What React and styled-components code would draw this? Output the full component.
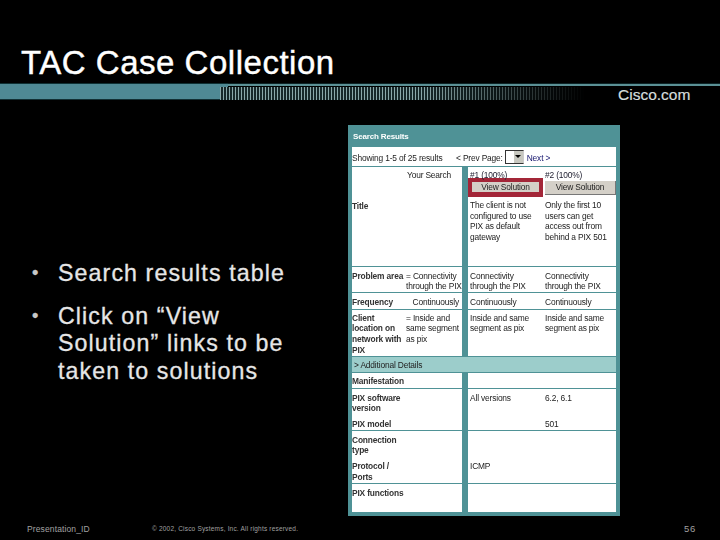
import React from 'react';
import styled, { createGlobalStyle } from 'styled-components';

const GlobalStyle = createGlobalStyle`
    html, body {
        margin: 0;
        padding: 0;
        background: #000;
    }
    * {
        box-sizing: border-box;
    }
`;

const Slide = styled.div`
    width: 720px;
    height: 540px;
    background: #000;
    color: #fff;
    font-family: "Liberation Sans", Arial, sans-serif;
    display: flex;
    flex-direction: column;
    overflow: hidden;
`;
const Title = styled.h1`
    margin: 0;
    height: 83px;
    padding: 44px 0 0 21px;
    font-size: 33px;
    line-height: 38px;
    font-weight: 400;
    letter-spacing: 0.52px;
    color: #fff;
    -webkit-text-stroke: 0.4px #fff;
`;
const Rule = styled.div`
    height: 17px;
    display: flex;
    align-items: stretch;
    position: relative;
    background: linear-gradient(#0c2224 0 1px, #5b9095 1px 3px, #000 3px);
`;
const RuleSolid = styled.div`
    width: 228px;
    margin-right: -8px;
    background: linear-gradient(#0f3033 0 1px, #4f8994 1px 16px, #123034 16px);
    clip-path: polygon(0 0, 100% 0, 100% 5px, 220px 100%, 0 100%);
`;
const RuleStripes = styled.div`
    width: 365px;
    margin-top: 4px;
    background: repeating-linear-gradient(90deg, #8aa8aa 0 1px, #16282a 1px 3px);
    mask-image: linear-gradient(90deg, #000 55%, transparent);
`;
const Logo = styled.div`
    position: absolute;
    left: 618px;
    top: 3px;
    font-size: 15.5px;
    line-height: 18px;
    color: #d5dddd;
    -webkit-text-stroke: 0.2px #d5dddd;
`;
const Main = styled.main`
    flex: 1;
    display: flex;
    padding-top: 25px;
`;
const Bullets = styled.ul`
    width: 348px;
    margin: 0;
    padding: 135px 0 0 32px;
    list-style: none;
    display: flex;
    flex-direction: column;
    gap: 15px;
`;
const Bullet = styled.li`
    display: flex;
    font-size: 23.2px;
    line-height: 27.5px;
    letter-spacing: 1.1px;
    color: #e6e6e6;
    -webkit-text-stroke: 0.3px #e6e6e6;
    &::before {
        content: "•";
        width: 26px;
        flex: none;
        font-size: 18px;
        color: #c8c8c8;
    }
`;
const Shot = styled.div`
    width: 272px;
    height: 391px;
    padding: 0 4px 4px;
    background: #4f9296;
    color: #222;
    font-size: 8.4px;
    letter-spacing: -0.16px;
    line-height: 10.7px;
    display: flex;
    flex-direction: column;
    filter: blur(0.35px);
`;
const ShotHeader = styled.div`
    height: 22px;
    padding: 6px 1px 0;
    color: #fff;
    font-size: 8px;
    font-weight: 700;
    line-height: 11px;
`;
const Pager = styled.div`
    height: 20px;
    padding-top: 3px;
    background: #fff;
    display: flex;
    align-items: center;
    border-bottom: 1px solid #4f9296;
    white-space: pre;
`;
const Counter = styled.span`
    width: 104px;
`;
const PageSelect = styled.span`
    width: 19px;
    height: 14px;
    margin: -3px 3px 0 2px;
    border: 1px solid #333;
    border-right-color: #ccc;
    display: flex;
    justify-content: flex-end;
    background: #fff;
`;
const SelectArrow = styled.span`
    width: 9px;
    background: #c8c8c0;
    display: flex;
    align-items: center;
    justify-content: center;
    &::after {
        content: "";
        border: 3px solid transparent;
        border-top: 3px solid #000;
        margin-top: 3px;
    }
`;
const NextLink = styled.span`
    color: #16166e;
`;
const Row = styled.div`
    height: ${(p) => p.$h}px;
    flex: ${(p) => (p.$grow ? 1 : 'none')};
    display: grid;
    grid-template-columns: 53px 57px 6px 74px 74px;
    background: #fff;
    border-bottom: ${(p) => (p.$open ? 'none' : '1px solid #4f9296')};
`;
const Label = styled.div`
    font-weight: 700;
    color: #333;
    padding-top: ${(p) => p.$top || 4}px;
    margin-right: -6px;
    white-space: nowrap;
`;
const LabelBlock = styled.div`
    margin-top: ${(p) => p.$gap || 0}px;
`;
const Cell = styled.div`
    padding: ${(p) => p.$top || 4}px ${(p) => p.$right || 0}px 0 ${(p) => p.$left || 2}px;
    text-align: ${(p) => p.$align || 'left'};
    white-space: nowrap;
`;
const Gutter = styled.div`
    background: #4f9296;
`;
const Heading = styled.div`
    height: 7.5px;
    padding-left: ${(p) => p.$left}px;
    color: #223;
`;
const RedFrame = styled.div`
    width: 75px;
    height: 19px;
    border: 4px solid #a32638;
    border-bottom-width: 5px;
    background: #d4d0c8;
    text-align: center;
    line-height: 10px;
`;
const ViewButton = styled.div`
    width: 71px;
    height: 14px;
    margin: 3px 0 0 3px;
    background: #d4d0c8;
    border-right: 1px solid #777;
    border-bottom: 1px solid #777;
    text-align: center;
    line-height: 12px;
`;
const Summary = styled.div`
    padding: ${(p) => p.$top}px 0 0 ${(p) => p.$left}px;
`;
const Band = styled.div`
    height: 16px;
    padding: 3px 2px 0;
    background: #9ccdcb;
    border-bottom: 1px solid #4f9296;
    flex: none;
`;
const Footer = styled.footer`
    height: 0;
    position: relative;
`;
const FootText = styled.span`
    position: absolute;
    left: ${(p) => p.$left}px;
    top: -17px;
    white-space: nowrap;
    color: #a0a0a0;
    font-size: ${(p) => p.$size}px;
    line-height: 12px;
    letter-spacing: ${(p) => p.$track}px;
`;

const App = () => {
    return (
        <Slide>
            <GlobalStyle />
            <Title>TAC Case Collection</Title>
            <Rule>
                <RuleSolid />
                <RuleStripes />
                <Logo>Cisco.com</Logo>
            </Rule>
            <Main>
                <Bullets>
                    <Bullet>Search results table</Bullet>
                    <Bullet>
                        <span>
                            Click on “View
                            <br />
                            Solution” links to be
                            <br />
                            taken to solutions
                        </span>
                    </Bullet>
                </Bullets>
                <Shot>
                    <ShotHeader>Search Results</ShotHeader>
                    <Pager>
                        <Counter>Showing 1-5 of 25 results</Counter>
                        <span>&lt; Prev Page:</span>
                        <PageSelect>
                            <SelectArrow />
                        </PageSelect>
                        <NextLink>Next &gt;</NextLink>
                    </Pager>
                    <Row $h={100}>
                        <Label $top={34}>Title</Label>
                        <Cell $align="right" $right={11} $top={3}>
                            Your Search
                        </Cell>
                        <Gutter />
                        <Cell $left={0.01} $top={3}>
                            <Heading $left={2}>#1 (100%)</Heading>
                            <RedFrame>View Solution</RedFrame>
                            <Summary $top={3.5} $left={2}>
                                The client is not
                                <br />
                                configured to use
                                <br />
                                PIX as default
                                <br />
                                gateway
                            </Summary>
                        </Cell>
                        <Cell $left={0.01} $top={3}>
                            <Heading $left={3}>#2 (100%)</Heading>
                            <ViewButton>View Solution</ViewButton>
                            <Summary $top={5.5} $left={3}>
                                Only the first 10
                                <br />
                                users can get
                                <br />
                                access out from
                                <br />
                                behind a PIX 501
                            </Summary>
                        </Cell>
                    </Row>
                    <Row $h={26}>
                        <Label $top={3.5}>Problem area</Label>
                        <Cell $left={1} $top={3.5}>
                            = Connectivity
                            <br />
                            through the PIX
                        </Cell>
                        <Gutter />
                        <Cell $top={3.5}>
                            Connectivity
                            <br />
                            through the PIX
                        </Cell>
                        <Cell $left={3} $top={3.5}>
                            Connectivity
                            <br />
                            through the PIX
                        </Cell>
                    </Row>
                    <Row $h={17}>
                        <Label>Frequency</Label>
                        <Cell $align="right" $right={3}>
                            Continuously
                        </Cell>
                        <Gutter />
                        <Cell>Continuously</Cell>
                        <Cell $left={3}>Continuously</Cell>
                    </Row>
                    <Row $h={47}>
                        <Label $top={2.5}>
                            Client
                            <br />
                            location on
                            <br />
                            network with
                            <br />
                            PIX
                        </Label>
                        <Cell $left={1} $top={2.5}>
                            = Inside and
                            <br />
                            same segment
                            <br />
                            as pix
                        </Cell>
                        <Gutter />
                        <Cell $top={2.5}>
                            Inside and same
                            <br />
                            segment as pix
                        </Cell>
                        <Cell $left={3} $top={2.5}>
                            Inside and same
                            <br />
                            segment as pix
                        </Cell>
                    </Row>
                    <Band>&gt; Additional Details</Band>
                    <Row $h={16}>
                        <Label $top={3}>Manifestation</Label>
                        <Cell />
                        <Gutter />
                        <Cell />
                        <Cell />
                    </Row>
                    <Row $h={26} $open>
                        <Label $top={3.5}>
                            PIX software
                            <br />
                            version
                        </Label>
                        <Cell />
                        <Gutter />
                        <Cell $top={3.5}>All versions</Cell>
                        <Cell $left={3} $top={3.5}>
                            6.2, 6.1
                        </Cell>
                    </Row>
                    <Row $h={16}>
                        <Label $top={3.5}>PIX model</Label>
                        <Cell />
                        <Gutter />
                        <Cell />
                        <Cell $left={3} $top={3.5}>
                            501
                        </Cell>
                    </Row>
                    <Row $h={53}>
                        <Label $top={3.5}>
                            <LabelBlock>
                                Connection
                                <br />
                                type
                            </LabelBlock>
                            <LabelBlock $gap={5}>
                                Protocol /
                                <br />
                                Ports
                            </LabelBlock>
                        </Label>
                        <Cell />
                        <Gutter />
                        <Cell $top={29.5}>ICMP</Cell>
                        <Cell />
                    </Row>
                    <Row $grow $open>
                        <Label $top={3.5}>PIX functions</Label>
                        <Cell />
                        <Gutter />
                        <Cell />
                        <Cell />
                    </Row>
                </Shot>
            </Main>
            <Footer>
                <FootText $left={27} $size={8.5} $track={0.12}>
                    Presentation_ID
                </FootText>
                <FootText $left={152} $size={6.5} $track={0.19}>
                    © 2002, Cisco Systems, Inc. All rights reserved.
                </FootText>
                <FootText $left={684} $size={9.5} $track={0.8}>
                    56
                </FootText>
            </Footer>
        </Slide>
    );
};

export default App;
